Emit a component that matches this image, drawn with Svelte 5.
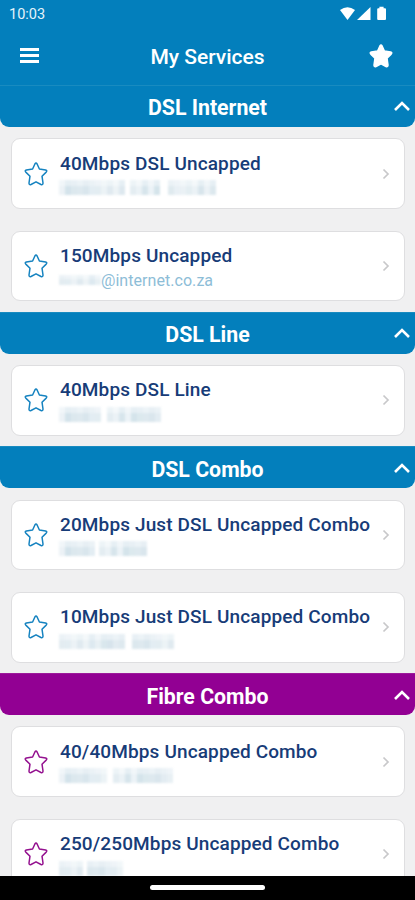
<script lang="ts">
  type Service = { name: string; masked: number[]; suffix?: string };
  type Section = { title: string; fibre?: boolean; services: Service[] };

  // masked holds the word widths of a hidden account name, in mosaic cells
  // (a negative number is a gap in px)
  let sections: Section[] = [
    {
      title: 'DSL Internet',
      services: [
        { name: '40Mbps DSL Uncapped', masked: [11, -5, 5, -8, 8] },
        { name: '150Mbps Uncapped', masked: [7], suffix: '@internet.co.za' }
      ]
    },
    {
      title: 'DSL Line',
      services: [{ name: '40Mbps DSL Line', masked: [7, -6, 9] }]
    },
    {
      title: 'DSL Combo',
      services: [
        { name: '20Mbps Just DSL Uncapped Combo', masked: [6, -4, 8] },
        { name: '10Mbps Just DSL Uncapped Combo', masked: [11, -7, 7] }
      ]
    },
    {
      title: 'Fibre Combo',
      fibre: true,
      services: [
        { name: '40/40Mbps Uncapped Combo', masked: [8, -6, 10] },
        { name: '250/250Mbps Uncapped Combo', masked: [4, -4, 6] }
      ]
    }
  ];

  const shades = [0.55, 0.95, 0.7, 1, 0.8, 0.45, 0.9, 0.65, 1, 0.75, 0.5];

  const cells = (count: number, seed: number) =>
    Array.from({ length: count }, (_, i) => shades[(i * 3 + seed) % shades.length]);
</script>

{#snippet star(filled: boolean)}
  <svg class="star" class:filled viewBox="0 0 24 24">
    <path d="M10.9 2Q12 .2 13.1 2L15.4 7 21.6 8Q23.6 8.6 22.2 10.1L18 14.2 19 21Q19 23.2 17 22.5L12 19.8 7 22.5Q5 23.2 5 21L6 14.2 1.8 10.1Q.4 8.6 2.4 8L8.6 7Z" />
  </svg>
{/snippet}

<div class="screen">
  <header>
    <div class="status">
      <span class="time">10:03</span>
      <svg class="system" viewBox="0 0 48 16">
        <path d="M0 4Q7.5-1.5 15 4L7.5 14Z" />
        <path d="M17 14 30.5 1V14Z" />
        <path d="M37.2 3.2Q37.2 2.2 38.2 2.2H39.4V.7H43.6V2.2H45Q46 2.2 46 3.2V13Q46 14 45 14H38.2Q37.2 14 37.2 13Z" />
      </svg>
    </div>
    <div class="bar">
      <button class="menu" aria-label="Menu"><i></i><i></i><i></i></button>
      <h1>My Services</h1>
      <button class="favourites" aria-label="Favourites">{@render star(true)}</button>
    </div>
  </header>

  <main>
    {#each sections as section}
      <section class:fibre={section.fibre}>
        <div class="heading">
          <h2>{section.title}</h2>
          <svg class="chevron" viewBox="0 0 18 12"><path d="M2 10 9 3 16 10" /></svg>
        </div>
        <ul>
          {#each section.services as service, s}
            <li>
              {@render star(false)}
              <div class="info">
                <span class="name">{service.name}</span>
                <span class="account">
                  <span class="mask" class:short={service.suffix}>
                    {#each service.masked as count, w}
                      {#if count < 0}
                        <span style="width: {-count}px"></span>
                      {:else}
                        <span class="word">
                          {#each cells(count, w + s * 4) as shade, c}
                            <i style="opacity: {shade}"><b style="opacity: {shades[(c + w) % 11]}"></b></i>
                          {/each}
                        </span>
                      {/if}
                    {/each}
                  </span>
                  {#if service.suffix}<span class="suffix">{service.suffix}</span>{/if}
                </span>
              </div>
              <svg class="arrow" viewBox="0 0 8 12"><path d="M1.5 1.5 6 6 1.5 10.5" /></svg>
            </li>
          {/each}
        </ul>
      </section>
    {/each}
  </main>

  <footer><span></span></footer>
</div>

<style>
  :global(body) {
    margin: 0;
  }

  .screen {
    display: flex;
    flex-direction: column;
    width: 415px;
    height: 900px;
    overflow: hidden;
    background: #f0f0f1;
    font-family: Roboto, "Liberation Sans", sans-serif;
  }

  header {
    flex: none;
    height: 85px;
    background: #037fbc;
    color: #fff;
  }

  .status {
    display: flex;
    justify-content: space-between;
    align-items: center;
    height: 28px;
    padding: 0 27px 0 9px;
  }

  .time {
    font-size: 14.5px;
    color: #e4f3fb;
  }

  .system {
    width: 48px;
    height: 16px;
    fill: #fff;
  }

  .bar {
    display: grid;
    grid-template-columns: 60px 1fr 60px;
    align-items: center;
    height: 57px;
  }

  button {
    border: 0;
    padding: 0;
    background: none;
  }

  .menu {
    display: grid;
    gap: 2.7px;
    width: 19px;
    margin: -2px 0 0 20px;
  }

  .menu i {
    height: 3px;
    background: #fff;
  }

  h1,
  h2 {
    margin: 0;
    text-align: center;
    color: #fff;
  }

  h1 {
    font-size: 21px;
    font-weight: 500;
  }

  .favourites {
    display: flex;
    width: 24px;
    height: 24px;
    margin: -2px 0 0 14px;
  }

  .star {
    flex: none;
    width: 24px;
    height: 24px;
    fill: none;
    stroke: #1683c0;
    stroke-width: 1.5;
    stroke-linejoin: round;
  }

  .star.filled {
    fill: #fff;
    stroke: #fff;
  }

  .fibre .star {
    stroke: #94118f;
  }

  main {
    flex: 1;
    min-height: 0;
    overflow: hidden;
  }

  .heading {
    display: grid;
    grid-template-columns: 30px 1fr 30px;
    align-items: center;
    height: 41.8px;
    box-sizing: border-box;
    border-top: 1px solid #198bc0;
    border-radius: 0 0 9px 9px;
    background: #037fbc;
  }

  .fibre .heading {
    border-color: #9d1a9b;
    background: #920093;
  }

  h2 {
    grid-column: 2;
    margin-top: 3px;
    font-size: 21.3px;
    font-weight: 700;
  }

  .chevron {
    width: 18px;
    height: 12px;
    margin-left: 8px;
    fill: none;
    stroke: #fff;
    stroke-width: 2.6;
  }

  ul {
    display: grid;
    gap: 22px;
    margin: 0;
    padding: 11.5px 10.5px 10.6px 11px;
    list-style: none;
  }

  li {
    display: flex;
    align-items: center;
    height: 70.5px;
    box-sizing: border-box;
    padding: 0 14px 0 12px;
    border: 1px solid #dedee0;
    border-radius: 9px;
    background: #fff;
  }

  .info {
    display: grid;
    flex: 1;
    margin: 4px 0 0 12px;
    white-space: nowrap;
  }

  .name {
    font-size: 19px;
    line-height: 24px;
    font-weight: 500;
    letter-spacing: 0.13px;
    color: #173c78;
  }

  .account {
    display: flex;
    align-items: center;
    height: 24px;
    font-size: 16px;
    color: #8dbdd7;
  }

  .mask {
    display: flex;
    height: 15px;
    margin-left: -1px;
    filter: blur(1.2px);
  }

  .mask.short {
    height: 10px;
  }

  .word {
    display: flex;
  }

  .word i {
    display: flex;
    align-items: flex-end;
    width: 6px;
    background: #e6eff4;
  }

  .word b {
    width: 6px;
    height: 60%;
    background: #d3e2ea;
  }

  .suffix {
    letter-spacing: 0.05px;
  }

  .arrow {
    width: 8px;
    height: 12px;
    fill: none;
    stroke: #c8c8ca;
    stroke-width: 1.7;
  }

  footer {
    display: flex;
    justify-content: center;
    flex: none;
    height: 24px;
    background: #000;
  }

  footer span {
    width: 115px;
    height: 5px;
    margin-top: 9px;
    border-radius: 3px;
    background: #fff;
  }
</style>
